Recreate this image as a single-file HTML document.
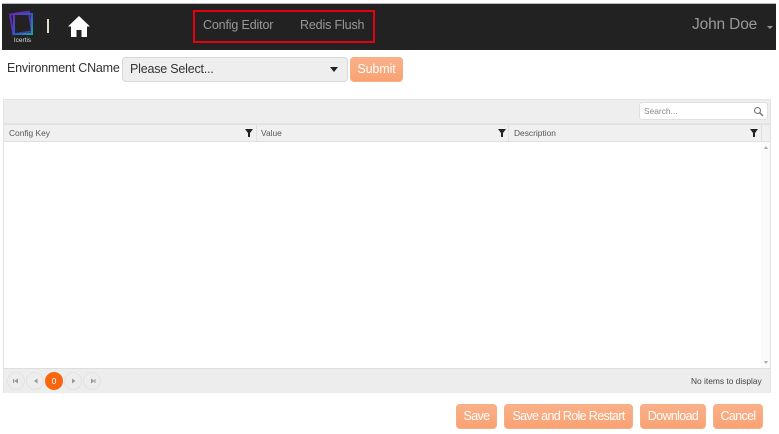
<!DOCTYPE html>
<html>
<head>
<meta charset="utf-8">
<style>
html,body{margin:0;padding:0;background:#fff;}
body{width:779px;height:434px;position:relative;overflow:hidden;font-family:"Liberation Sans",sans-serif;filter:blur(.35px);}
div,span{position:absolute;box-sizing:border-box;white-space:nowrap;}
svg{position:absolute;}
.btn{background:linear-gradient(#fbb088,#f8a274);border:1px solid #f6ae84;border-radius:4px;color:#fff;font-size:12.500px;letter-spacing:-.65px;text-align:center;line-height:23px;height:25px;top:404px;}
.th{font-size:8.400px;color:#555;top:124px;line-height:18px;}
.pg{width:18px;height:18px;border-radius:50%;border:1px solid #e2e2e2;top:372px;}
</style>
</head>
<body>
<div style="left:2px;top:4px;width:774px;height:46px;background:#222;"></div>
<div style="left:2px;top:3px;width:774px;height:1px;background:#bbb;"></div>

<svg style="left:8px;top:10px" width="30" height="36" viewBox="0 0 30 36">
<defs><linearGradient id="g" x1="0" y1="0" x2="1" y2="1"><stop offset="0" stop-color="#6a2fc0"/><stop offset=".55" stop-color="#2a5fb8"/><stop offset="1" stop-color="#10a89a"/></linearGradient></defs>
<rect x="3.500" y="3" width="19" height="20" fill="none" stroke="#5a2fb5" stroke-width="2" transform="rotate(-9 13 13)"/>
<rect x="6" y="4" width="18" height="20" fill="none" stroke="url(#g)" stroke-width="2"/>
<text x="14.500" y="32" font-family="Liberation Sans" font-size="6.500" fill="#ddd" text-anchor="middle">Icertis</text>
</svg>
<div style="left:47px;top:19px;width:2px;height:14px;background:#e4dfc8;"></div>
<svg style="left:67px;top:15px" width="24" height="23" viewBox="0 0 24 23">
<path d="M12 1 L23 11.5 L20 11.5 L20 22 L14.5 22 L14.5 15 L9.5 15 L9.5 22 L4 22 L4 11.5 L1 11.5 Z" fill="#fff"/>
</svg>

<div style="left:193px;top:10px;width:182px;height:33px;border:2px solid #e3000f;"></div>
<span style="left:203px;top:18px;font-size:12.500px;letter-spacing:-.15px;line-height:15px;color:#999;">Config Editor</span>
<span style="left:300px;top:18px;font-size:12.500px;letter-spacing:-.15px;line-height:15px;color:#999;">Redis Flush</span>
<span style="left:692px;top:16px;font-size:15.500px;letter-spacing:-.15px;line-height:18px;color:#999;">John Doe</span>
<div style="left:767px;top:26px;width:0;height:0;border-left:3.500px solid transparent;border-right:3.500px solid transparent;border-top:3px solid #999;"></div>

<span style="left:7px;top:60px;font-size:12.500px;letter-spacing:-.2px;line-height:16px;color:#333;">Environment CName</span>
<div style="left:122px;top:57px;width:226px;height:25px;background:#eee;border:1px solid #d8d8d8;border-radius:4px;"></div>
<span style="left:130px;top:62px;font-size:12.500px;letter-spacing:-.2px;line-height:15px;color:#333;">Please Select...</span>
<div style="left:330px;top:67px;width:0;height:0;border-left:4px solid transparent;border-right:4px solid transparent;border-top:5px solid #222;"></div>
<div class="btn" style="left:350px;top:57px;width:53px;font-size:12.500px;letter-spacing:-.1px;">Submit</div>

<div style="left:3px;top:99px;width:768px;height:294px;background:#fff;border:1px solid #e4e4e4;"></div>
<div style="left:3px;top:99px;width:768px;height:25px;background:#efeeee;border:1px solid #e4e4e4;"></div>
<div style="left:639px;top:102px;width:129px;height:18px;background:#fff;border:1px solid #e0e0e0;border-radius:3px;"></div>
<span style="left:644px;top:106px;font-size:8.400px;line-height:10px;color:#888;">Search...</span>
<svg style="left:753px;top:106px" width="11" height="11" viewBox="0 0 11 11"><circle cx="4.500" cy="4.500" r="3" fill="none" stroke="#777" stroke-width="1.100"/><path d="M6.800 6.800 L10 10" stroke="#777" stroke-width="1.500"/></svg>

<div style="left:4px;top:124px;width:757px;height:18px;background:#f1f0f0;border-top:1px solid #e0e0e0;border-bottom:1px solid #e0e0e0;"></div>
<div style="left:761px;top:124px;width:9px;height:18px;background:#f1f0f0;border-left:1px solid #e0e0e0;border-top:1px solid #e0e0e0;border-bottom:1px solid #e0e0e0;"></div>
<div style="left:256px;top:124px;width:1px;height:18px;background:#e0e0e0;"></div>
<div style="left:508px;top:124px;width:1px;height:18px;background:#e0e0e0;"></div>
<span class="th" style="left:9px;">Config Key</span>
<span class="th" style="left:261px;">Value</span>
<span class="th" style="left:514px;">Description</span>
<svg style="left:245px;top:129px" width="8" height="8" viewBox="0 0 8 8"><path d="M0 0H8L5 4V8H3V4Z" fill="#222"/></svg>
<svg style="left:498px;top:129px" width="8" height="8" viewBox="0 0 8 8"><path d="M0 0H8L5 4V8H3V4Z" fill="#222"/></svg>
<svg style="left:750px;top:129px" width="8" height="8" viewBox="0 0 8 8"><path d="M0 0H8L5 4V8H3V4Z" fill="#222"/></svg>

<div style="left:761px;top:142px;width:9px;height:226px;background:#fafafa;"></div>
<div style="left:764px;top:146px;width:0;height:0;border-left:2px solid transparent;border-right:2px solid transparent;border-bottom:3px solid #aaa;"></div>
<div style="left:764px;top:361px;width:0;height:0;border-left:2px solid transparent;border-right:2px solid transparent;border-top:3px solid #aaa;"></div>

<div style="left:4px;top:368px;width:766px;height:25px;background:#eeeded;border-top:1px solid #ddd;"></div>
<div class="pg" style="left:7px;"></div>
<div class="pg" style="left:26px;"></div>
<div class="pg" style="left:64px;"></div>
<div class="pg" style="left:83px;"></div>
<div style="left:45px;top:372px;width:18px;height:18px;border-radius:50%;background:#f9660f;color:#fff;font-size:8.500px;text-align:center;line-height:18px;">0</div>
<svg style="left:7px;top:372px" width="95" height="18" viewBox="0 0 95 18" fill="#999">
<path d="M6 7V11H7V7ZM7 9L11 6.500V11.500Z"/>
<path d="M27 9L30.500 6.500V11.500Z"/>
<path d="M65 6.500L68.500 9L65 11.500Z"/>
<path d="M84 6.500L87.500 9L84 11.500ZM87.500 7V11H88.500V7Z"/>
</svg>
<span style="left:691px;top:376px;font-size:8.400px;line-height:10px;color:#444;">No items to display</span>

<div class="btn" style="left:456px;width:41px;">Save</div>
<div class="btn" style="left:504px;width:129px;">Save and Role Restart</div>
<div class="btn" style="left:640px;width:66px;">Download</div>
<div class="btn" style="left:713px;width:50px;">Cancel</div>
</body>
</html>
